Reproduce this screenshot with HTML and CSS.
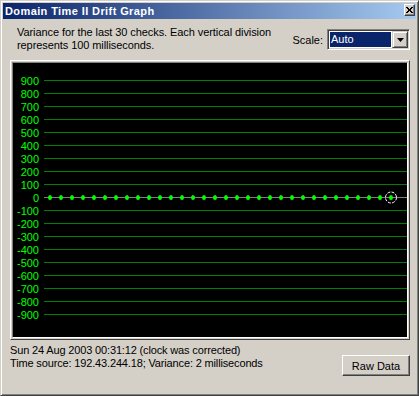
FILE: index.html
```html
<!DOCTYPE html>
<html>
<head>
<meta charset="utf-8">
<link rel="stylesheet" href="styles.css">
</head>
<body>
<div class="window">
  <div class="titlebar">
    <span class="title">Domain Time II Drift Graph</span>
    <span class="close"><svg width="7" height="6" viewBox="0 0 7 6"><path d="M0 0h2v1h1v1h1V1h1V0h2v1H6v1H5v2h1v1h1v1H5V5H4V4H3v1H2v1H0V5h1V4h1V2H1V1H0z" fill="#000"/></svg></span>
  </div>
  <div class="content">
    <div class="header">
      <p class="desc">Variance for the last 30 checks. Each vertical division<br>represents 100 milliseconds.</p>
      <div class="scale">
        <span class="scale-label">Scale:</span>
        <div class="combo">
          <div class="combo-field"><span class="combo-sel">Auto</span></div>
          <div class="combo-btn"><svg width="7" height="4" viewBox="0 0 7 4"><path d="M0 0h7L3.5 4z" fill="#000"/></svg></div>
        </div>
      </div>
    </div>
    <div class="graph-frame">
      <div class="graph">
        <svg class="chart" width="394" height="274" viewBox="0 0 394 274">
          <g stroke="#008000" stroke-width="1">
            <line x1="31" x2="394" y1="17.5" y2="17.5"/>
            <line x1="31" x2="394" y1="30.5" y2="30.5"/>
            <line x1="31" x2="394" y1="43.5" y2="43.5"/>
            <line x1="31" x2="394" y1="56.5" y2="56.5"/>
            <line x1="31" x2="394" y1="69.5" y2="69.5"/>
            <line x1="31" x2="394" y1="82.5" y2="82.5"/>
            <line x1="31" x2="394" y1="95.5" y2="95.5"/>
            <line x1="31" x2="394" y1="108.5" y2="108.5"/>
            <line x1="31" x2="394" y1="121.5" y2="121.5"/>
            <line x1="31" x2="394" y1="147.5" y2="147.5"/>
            <line x1="31" x2="394" y1="160.5" y2="160.5"/>
            <line x1="31" x2="394" y1="173.5" y2="173.5"/>
            <line x1="31" x2="394" y1="186.5" y2="186.5"/>
            <line x1="31" x2="394" y1="199.5" y2="199.5"/>
            <line x1="31" x2="394" y1="212.5" y2="212.5"/>
            <line x1="31" x2="394" y1="225.5" y2="225.5"/>
            <line x1="31" x2="394" y1="238.5" y2="238.5"/>
            <line x1="31" x2="394" y1="251.5" y2="251.5"/>
          </g>
          <line x1="31" x2="394" y1="134.5" y2="134.5" stroke="#808080" stroke-width="1"/>
          <g class="labels" fill="#00ff00" text-anchor="end">
            <text x="26" y="22">900</text>
            <text x="26" y="35">800</text>
            <text x="26" y="48">700</text>
            <text x="26" y="61">600</text>
            <text x="26" y="74">500</text>
            <text x="26" y="87">400</text>
            <text x="26" y="100">300</text>
            <text x="26" y="113">200</text>
            <text x="26" y="126">100</text>
            <text x="26" y="139">0</text>
            <text x="26" y="152">-100</text>
            <text x="26" y="165">-200</text>
            <text x="26" y="178">-300</text>
            <text x="26" y="191">-400</text>
            <text x="26" y="204">-500</text>
            <text x="26" y="217">-600</text>
            <text x="26" y="230">-700</text>
            <text x="26" y="243">-800</text>
            <text x="26" y="256">-900</text>
          </g>
          <g fill="#00ff00">
            <ellipse cx="37" cy="134.5" rx="2" ry="2.5"/>
            <ellipse cx="48" cy="134.5" rx="2" ry="2.5"/>
            <ellipse cx="59" cy="134.5" rx="2" ry="2.5"/>
            <ellipse cx="70" cy="134.5" rx="2" ry="2.5"/>
            <ellipse cx="81" cy="134.5" rx="2" ry="2.5"/>
            <ellipse cx="92" cy="134.5" rx="2" ry="2.5"/>
            <ellipse cx="103" cy="134.5" rx="2" ry="2.5"/>
            <ellipse cx="114" cy="134.5" rx="2" ry="2.5"/>
            <ellipse cx="125" cy="134.5" rx="2" ry="2.5"/>
            <ellipse cx="136" cy="134.5" rx="2" ry="2.5"/>
            <ellipse cx="147" cy="134.5" rx="2" ry="2.5"/>
            <ellipse cx="158" cy="134.5" rx="2" ry="2.5"/>
            <ellipse cx="169" cy="134.5" rx="2" ry="2.5"/>
            <ellipse cx="180" cy="134.5" rx="2" ry="2.5"/>
            <ellipse cx="191" cy="134.5" rx="2" ry="2.5"/>
            <ellipse cx="202" cy="134.5" rx="2" ry="2.5"/>
            <ellipse cx="213" cy="134.5" rx="2" ry="2.5"/>
            <ellipse cx="224" cy="134.5" rx="2" ry="2.5"/>
            <ellipse cx="235" cy="134.5" rx="2" ry="2.5"/>
            <ellipse cx="246" cy="134.5" rx="2" ry="2.5"/>
            <ellipse cx="257" cy="134.5" rx="2" ry="2.5"/>
            <ellipse cx="268" cy="134.5" rx="2" ry="2.5"/>
            <ellipse cx="279" cy="134.5" rx="2" ry="2.5"/>
            <ellipse cx="290" cy="134.5" rx="2" ry="2.5"/>
            <ellipse cx="301" cy="134.5" rx="2" ry="2.5"/>
            <ellipse cx="312" cy="134.5" rx="2" ry="2.5"/>
            <ellipse cx="323" cy="134.5" rx="2" ry="2.5"/>
            <ellipse cx="334" cy="134.5" rx="2" ry="2.5"/>
            <ellipse cx="345" cy="134.5" rx="2" ry="2.5"/>
            <ellipse cx="356" cy="134.5" rx="2" ry="2.5"/>
            <ellipse cx="367" cy="134.5" rx="2" ry="2.5"/>
            <ellipse cx="378" cy="134.5" rx="2" ry="2.5"/>
          </g>
          <circle cx="378" cy="134.5" r="5.5" fill="none" stroke="#fff" stroke-width="1" stroke-dasharray="3 1.3"/>
        </svg>
      </div>
    </div>
    <div class="footer">
      <p class="status">Sun 24 Aug 2003 00:31:12 (clock was corrected)<br>Time source: 192.43.244.18; Variance: 2 milliseconds</p>
      <button class="btn" type="button">Raw Data</button>
    </div>
  </div>
</div>
</body>
</html>
```
FILE: styles.css
```css
html, body {
  margin: 0;
  padding: 0;
  background: #d4d0c8;
}
body {
  font-family: "Liberation Sans", Arial, sans-serif;
  font-size: 11px;
  color: #000;
}
.window {
  width: 419px;
  height: 396px;
  box-sizing: border-box;
  border: 1px solid;
  border-color: #d4d0c8 #404040 #404040 #d4d0c8;
  box-shadow: inset 1px 1px #fff, inset -1px -1px #808080;
  padding: 2px;
  display: flex;
  flex-direction: column;
  background: #d4d0c8;
}
.titlebar {
  height: 16px;
  flex: none;
  background: linear-gradient(to right, #0a246a, #a6caf0);
  display: flex;
  justify-content: space-between;
  align-items: flex-start;
  color: #fff;
}
.title {
  font-weight: bold;
  font-size: 11px;
  line-height: 16px;
  padding-left: 2px;
  letter-spacing: 0.4px;
}
.close {
  margin: 1px 1px 0 0;
  width: 11px;
  height: 12px;
  box-sizing: border-box;
  background: #d4d0c8;
  border: 1px solid;
  border-color: #fff #404040 #404040 #fff;
  box-shadow: inset -1px -1px #808080;
  display: flex;
  align-items: center;
  justify-content: center;
}
.close svg { display: block; }
.content {
  flex: 1;
  padding: 0 6px 0 7px;
  display: flex;
  flex-direction: column;
}
.header {
  display: flex;
  justify-content: space-between;
  align-items: flex-start;
  height: 41px;
  box-sizing: border-box;
  padding: 7px 0 0 7px;
  flex: none;
}
.desc {
  margin: 0;
  line-height: 13px;
  letter-spacing: -0.08px;
}
.scale {
  display: flex;
  align-items: center;
  gap: 4px;
  margin-top: 3px;
  height: 21px;
}
.combo {
  width: 83px;
  height: 21px;
  box-sizing: border-box;
  border: 1px solid;
  border-color: #808080 #fff #fff #808080;
  box-shadow: inset 1px 1px #404040, inset -1px -1px #d4d0c8;
  padding: 1px;
  background: #fff;
  display: flex;
}
.combo-field {
  flex: 1;
  padding: 1px;
  display: flex;
}
.combo-sel {
  flex: 1;
  background: #0a246a;
  color: #fff;
  line-height: 15px;
  padding-left: 1px;
}
.combo-btn {
  width: 16px;
  height: 17px;
  box-sizing: border-box;
  background: #d4d0c8;
  border: 1px solid;
  border-color: #d4d0c8 #404040 #404040 #d4d0c8;
  box-shadow: inset 1px 1px #fff, inset -1px -1px #808080;
  display: flex;
  align-items: center;
  justify-content: center;
}
.combo-btn svg { display: block; }
.graph-frame {
  height: 280px;
  flex: none;
  box-sizing: border-box;
  border: 1px solid;
  border-color: #fff #404040 #404040 #fff;
  padding: 1px;
}
.graph {
  height: 100%;
  box-sizing: border-box;
  border: 1px solid;
  border-color: #808080 #fff #fff #808080;
  background: #000;
}
.chart {
  display: block;
}
.labels {
  font-family: "Liberation Sans", Arial, sans-serif;
  font-size: 11px;
}
.footer {
  display: flex;
  justify-content: space-between;
  align-items: flex-start;
  padding-top: 4px;
}
.status {
  margin: 0;
  line-height: 13px;
  letter-spacing: -0.15px;
}
.btn {
  margin: 11px 0 0 0;
  width: 68px;
  height: 21px;
  box-sizing: border-box;
  padding: 0;
  font-family: "Liberation Sans", Arial, sans-serif;
  font-size: 11px;
  color: #000;
  background: #d4d0c8;
  border: 1px solid;
  border-color: #fff #404040 #404040 #fff;
  box-shadow: inset -1px -1px #808080;
  border-radius: 0;
}
```
